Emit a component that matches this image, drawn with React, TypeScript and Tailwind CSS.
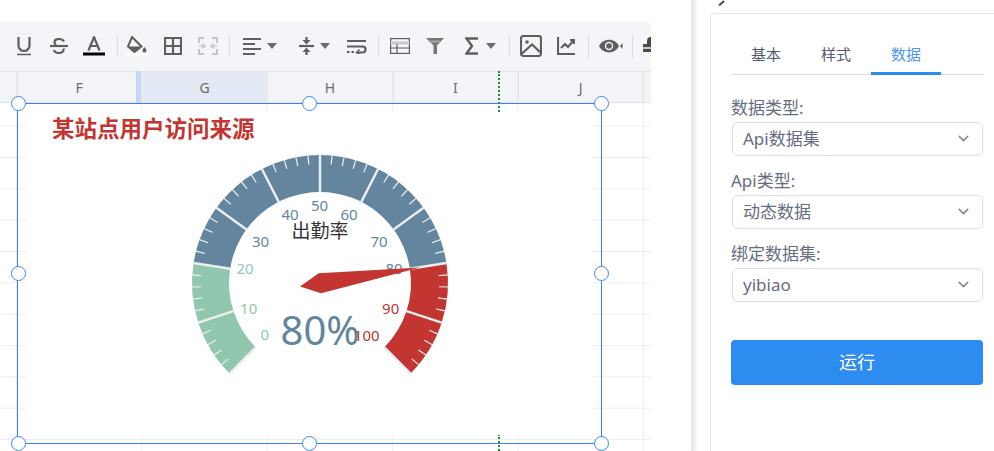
import { ChevronDown } from "lucide-react";

const ink = "#5f5f5f";

const polar = (r: number, v: number) => {
  const a = ((225 - v * 2.7) * Math.PI) / 180;
  return [320 + r * Math.cos(a), 283 - r * Math.sin(a)];
};

const band = (from: number, to: number) => {
  const [x1, y1] = polar(128, from);
  const [x2, y2] = polar(128, to);
  const [x3, y3] = polar(91, to);
  const [x4, y4] = polar(91, from);
  const large = (to - from) * 2.7 > 180 ? 1 : 0;
  return `M${x1} ${y1}A128 128 0 ${large} 1 ${x2} ${y2}L${x3} ${y3}A91 91 0 ${large} 0 ${x4} ${y4}Z`;
};

const gaugeLabels = [
  { v: 0, x: 264.7, y: 334, color: "#91c7ae" },
  { v: 10, x: 248.7, y: 308, color: "#91c7ae" },
  { v: 20, x: 245, y: 268, color: "#91c7ae" },
  { v: 30, x: 260.5, y: 241, color: "#63869e" },
  { v: 40, x: 290, y: 214, color: "#63869e" },
  { v: 50, x: 319.5, y: 205, color: "#63869e" },
  { v: 60, x: 349, y: 214, color: "#63869e" },
  { v: 70, x: 379, y: 241, color: "#63869e" },
  { v: 80, x: 394, y: 268, color: "#63869e" },
  { v: 90, x: 390.7, y: 308, color: "#c23531" },
  { v: 100, x: 366.7, y: 335, color: "#c23531" },
];

const Gauge = () => {
  const ticks = Array.from({ length: 51 }, (_, i) => i * 2);
  return (
    <svg width="300" height="250" viewBox="170 145 300 250">
      <path d={band(0, 20)} fill="#91c7ae" />
      <path d={band(20, 80)} fill="#63869e" />
      <path d={band(80, 100)} fill="#c23531" />
      {ticks.map((v) => {
        const major = v % 10 === 0;
        const [x1, y1] = polar(major ? 91 : 119, v);
        const [x2, y2] = polar(128, v);
        return <line key={v} x1={x1} y1={y1} x2={x2} y2={y2} stroke="#eeeeee" strokeWidth={major ? 2.4 : 1.2} />;
      })}
      {gaugeLabels.map((l) => (
        <text key={l.v} x={l.x} y={l.y + 5.5} textAnchor="middle" fontSize="15" fill={l.color}>
          {l.v}
        </text>
      ))}
      <text x="320" y="238" textAnchor="middle" fontSize="19" fill="#333333">
        出勤率
      </text>
      <polygon points="420,267.500 318.700,273.300 300,286.500 321,293.300" fill="#c23531" />
      <text x="320" y="345" textAnchor="middle" fontSize="40" fill="#63869e">
        80%
      </text>
    </svg>
  );
};

const Svg = ({ w, h, children }: { w: number; h: number; children: React.ReactNode }) => (
  <svg width={w} height={h} viewBox={`0 0 ${w} ${h}`} fill="none" stroke={ink} strokeWidth="2.200">
    {children}
  </svg>
);

const Caret = () => (
  <svg width="10" height="6" viewBox="0 0 10 6" className="ml-[6px]">
    <path d="M0 0h10L5 6z" fill="#6b6b6b" />
  </svg>
);

const Sep = ({ className }: { className: string }) => (
  <div className={`flex shrink-0 justify-center ${className}`}>
    <div className="h-[23px] w-px bg-[#dcdcdc]" />
  </div>
);

const Tool = ({ className, children }: { className: string; children: React.ReactNode }) => (
  <div className={`flex shrink-0 items-center justify-center ${className}`}>{children}</div>
);

const Toolbar = () => (
  <div className="flex h-[50px] items-center rounded-tr-[6px] bg-[#f4f5f8] pl-[6px]">
    <Tool className="w-[35px]">
      <Svg w={16} h={20}>
        <path d="M2.500 1v8.500a5.500 5.500 0 0 0 11 0V1" />
        <path d="M1 18.500h14" strokeWidth="1.500" />
      </Svg>
    </Tool>
    <Tool className="w-[35px]">
      <Svg w={18} h={16}>
        <path d="M14 3.500C13 1.500 11 1 9 1 6.500 1 4.500 2.200 4.500 4.300c0 1 .5 2 1.500 2.700" />
        <path d="M0 8h18" />
        <path d="M13.500 10.500c.5 2.800-1.500 4.500-4.500 4.500-2.500 0-4.500-1-5-3" />
      </Svg>
    </Tool>
    <Tool className="w-[36px]">
      <svg width="22" height="20" viewBox="0 0 22 20" fill="none" stroke={ink} strokeWidth="2.200">
        <path d="M5.500 14.500 11 1l5.500 13.500M7.500 10h7" />
        <path d="M0 18h22" stroke="#000" strokeWidth="3" />
      </svg>
    </Tool>
    <Sep className="w-[10px]" />
    <Tool className="w-[30px]">
      <svg width="22" height="20" viewBox="0 0 22 20">
        <path d="M6 1l9.500 9.500L8.500 16 2 10.500z" fill="none" stroke={ink} strokeWidth="2" />
        <path d="M2 10.500h13.500L8.500 16z" fill={ink} />
        <path d="M18.500 11c1.500 2 2 2.800 2 3.500a2 2 0 0 1-4 0c0-.7.5-1.500 2-3.500z" fill={ink} />
        <path d="M0 18.500h22" stroke="#ffffff" strokeWidth="2.500" />
      </svg>
    </Tool>
    <Tool className="w-[42px]">
      <Svg w={18} h={18}>
        <path d="M1 1h16v16H1zM9 1v16M1 9h16" />
      </Svg>
    </Tool>
    <Tool className="w-[28px]">
      <svg width="20" height="18" viewBox="0 0 20 18" fill="none" stroke="#c4c6c8" strokeWidth="2">
        <path d="M1 6V1h5M14 1h5v5M1 12v5h5M14 17h5v-5" />
        <path d="M1 9h5M4 6.500 7 9l-3 2.500M19 9h-5M16 6.500 13 9l3 2.500" strokeWidth="1.500" />
      </svg>
    </Tool>
    <Sep className="w-[15px]" />
    <Tool className="w-[46px]">
      <Svg w={18} h={18}>
        <path d="M0 2h18M0 7h12M0 12h18M0 17h12" />
      </Svg>
      <Caret />
    </Tool>
    <Tool className="w-[47px] pl-[15px]">
      <Svg w={15} h={18}>
        <path d="M0 9h15" />
        <path d="M7.500 0v3.500M7.500 14.500V18" />
        <path d="M3.500 3h8L7.500 7.500zM3.500 15h8L7.500 10.500z" fill={ink} stroke="none" />
      </Svg>
      <Caret />
    </Tool>
    <Tool className="w-[43px] pl-[10px]">
      <Svg w={20} h={15}>
        <path d="M0 2h19M0 7.500h15.500a3 3 0 0 1 0 6H10" />
        <path d="M12.500 10.500 9.500 13.500l3 1.500" strokeWidth="1.500" />
        <path d="M0 13h2.500M4.500 13H7" />
      </Svg>
    </Tool>
    <Sep className="w-[11px]" />
    <Tool className="w-[32px]">
      <svg width="20" height="16" viewBox="0 0 20 16" fill="none" stroke={ink} strokeWidth="1.200">
        <rect x=".6" y=".6" width="18.800" height="14.800" />
        <path d="M.6 5h18.800" strokeWidth="3" stroke="#c9c9c9" />
        <path d="M.6 10h18.800M7 6v9.400" />
      </svg>
    </Tool>
    <Tool className="w-[38px]">
      <svg width="18" height="16" viewBox="0 0 18 16">
        <path d="M0 0h18l-7 7.500V16H7.500V7.500z" fill={ink} opacity=".85" />
        <path d="M3.500 3.500h11" stroke="#a8a8a8" strokeWidth="2" />
      </svg>
    </Tool>
    <Tool className="w-[42px] pl-[10px]">
      <Svg w={15} h={18}>
        <path d="M13 1.500H1.500L7 9l-5.500 7.500H13" strokeWidth="2.400" />
      </Svg>
      <Caret />
    </Tool>
    <Sep className="ml-[8px] w-[10px]" />
    <Tool className="w-[34px]">
      <svg width="22" height="22" viewBox="0 0 22 22" fill="none" stroke={ink} strokeWidth="2.200">
        <rect x="1" y="1" width="20" height="20" rx="2.500" />
        <circle cx="7" cy="7" r="1.800" fill={ink} stroke="none" />
        <path d="M1.500 19 12 9.500l8.500 8" />
      </svg>
    </Tool>
    <Tool className="w-[36px]">
      <Svg w={18} h={18}>
        <path d="M1 0v17h17" />
        <path d="M4 11l4-4 3 3 5-6M13 3h4v4" strokeWidth="2" />
      </Svg>
    </Tool>
    <Sep className="w-[8px]" />
    <Tool className="w-[38px]">
      <svg width="24" height="14" viewBox="0 0 24 14">
        <path d="M0 7c4-8.500 16-8.500 20 0-4 8.500-16 8.500-20 0z" fill={ink} />
        <circle cx="10" cy="7" r="4.200" fill="#f4f5f8" />
        <circle cx="10" cy="7" r="2.800" fill={ink} />
        <path d="M21 7l2.500-3v6z" fill={ink} />
      </svg>
    </Tool>
    <Sep className="w-[5px]" />
    <div className="ml-[8px] w-[8px] shrink-0 overflow-hidden">
      <svg width="16" height="18" viewBox="0 0 16 18">
        <path d="M4 4a4 4 0 0 1 8 0v3h4v8H0V7h4z" fill="#4a4a4a" />
        <path d="M0 11h16" stroke="#f4f5f8" strokeWidth="1.500" />
      </svg>
    </div>
  </div>
);

const columns = ["F", "G", "H", "I", "J"];

const ColumnHeader = () => (
  <div className="flex h-[32px] border-y border-[#e3e3e3] bg-[#f3f4f8] pl-[15.500px] text-[14px] text-[#6b6b6b]">
    {columns.map((c) => (
      <div
        key={c}
        className={`flex w-[125.400px] items-center justify-center border-l-2 border-[#e9e9e9] ${
          c === "G" ? "bg-[#e4e9f6]" : ""
        }`}
      >
        {c}
      </div>
    ))}
    <div className="flex-1 border-l-2 border-[#e9e9e9]" />
  </div>
);

const handles = [
  "left-[-7px] top-[-8px]",
  "left-[284px] top-[-8px]",
  "left-[576px] top-[-8px]",
  "left-[-7px] top-[162px]",
  "left-[576px] top-[162px]",
  "left-[-7px] top-[332px]",
  "left-[284px] top-[332px]",
  "left-[576px] top-[332px]",
];

const ChartFrame = () => (
  <div className="absolute left-[17px] top-[82px] h-[341px] w-[585px] border border-[#3f7fe8]">
    <div className="absolute left-[9px] top-[9px] h-[322px] w-[565px] bg-white" />
    <div className="absolute left-[34px] top-[8px] text-[22.500px] font-bold leading-[34px] text-[#c23531]">
      某站点用户访问来源
    </div>
    <div className="absolute left-[152px] top-[41px]">
      <Gauge />
    </div>
    {handles.map((h) => (
      <div key={h} className={`absolute h-[15px] w-[15px] rounded-full border-[1.500px] border-[#3f85f0] bg-white ${h}`} />
    ))}
  </div>
);

const Field = ({ label, value }: { label: string; value: string }) => (
  <div className="flex flex-col">
    <label className="h-[28px] text-[17px] leading-[28px] text-[#666d80]">{label}</label>
    <div className="ml-px flex h-[34.500px] w-[251px] items-center justify-between rounded-[5px] border border-[#dcdee2] px-[10px] text-[17px] text-[#666d80]">
      <span>{value}</span>
      <ChevronDown size={17} strokeWidth={2} color="#808695" />
    </div>
  </div>
);

const SidePanel = () => (
  <div className="flex h-full flex-1">
    <div className="h-full w-[8px] bg-gradient-to-r from-[#e6e6e6] to-white" />
    <div className="relative ml-[11px] mt-[13px] flex-1 rounded-tl-[5px] border-l border-t border-[#e6e6e6] pl-[20px] pt-[26px]">
      <svg width="8" height="6" viewBox="0 0 8 6" className="absolute left-[7px] top-[-14px]">
        <path d="M1 5.500 6 1" stroke="#444444" strokeWidth="1.800" />
      </svg>
      <div className="flex h-[35px] w-[252px] border-b border-[#dcdee2] text-[15px]">
        <div className="flex w-[70px] justify-center pt-[3px] text-[#515a6e]">基本</div>
        <div className="flex w-[70px] justify-center pt-[3px] text-[#515a6e]">样式</div>
        <div className="flex h-[35px] w-[70px] justify-center border-b-[3px] border-[#2d8cf0] pt-[3px] text-[#4e96ee]">数据</div>
      </div>
      <div className="mt-[18.500px] flex flex-col gap-[10.500px]">
        <Field label="数据类型:" value="Api数据集" />
        <Field label="Api类型:" value="动态数据" />
        <Field label="绑定数据集:" value="yibiao" />
      </div>
      <button className="mt-[38px] flex h-[45px] w-[252px] items-center justify-center rounded-[4px] bg-[#2d8cf0] text-[18px] text-white">
        运行
      </button>
    </div>
  </div>
);

export default function App() {
  return (
    <div className="flex h-[451px] w-[994px] overflow-hidden bg-white font-['Noto_Sans','Noto_Sans_CJK_SC',sans-serif]">
      <div className="w-[691px] shrink-0 pt-[21px]">
        <div className="relative flex h-[430px] w-[651px] flex-col overflow-hidden">
          <Toolbar />
          <ColumnHeader />
          <div className="flex-1 bg-[linear-gradient(to_right,#eeeeee_1px,transparent_1px),linear-gradient(to_bottom,#eeeeee_1px,transparent_1px)] bg-[size:125.400px_31.330px] bg-[position:16px_22.700px]" />
          <div className="absolute left-[136px] top-[50px] h-[32px] w-[5px] bg-[#c6d6f6]" />
          <div className="absolute left-[498px] top-[50px] h-[41px] border-l-2 border-dotted border-[#1a8f2e]" />
          <div className="absolute left-[498px] top-[413px] h-[17px] border-l-2 border-dotted border-[#1a8f2e]" />
          <ChartFrame />
        </div>
      </div>
      <SidePanel />
    </div>
  );
}
